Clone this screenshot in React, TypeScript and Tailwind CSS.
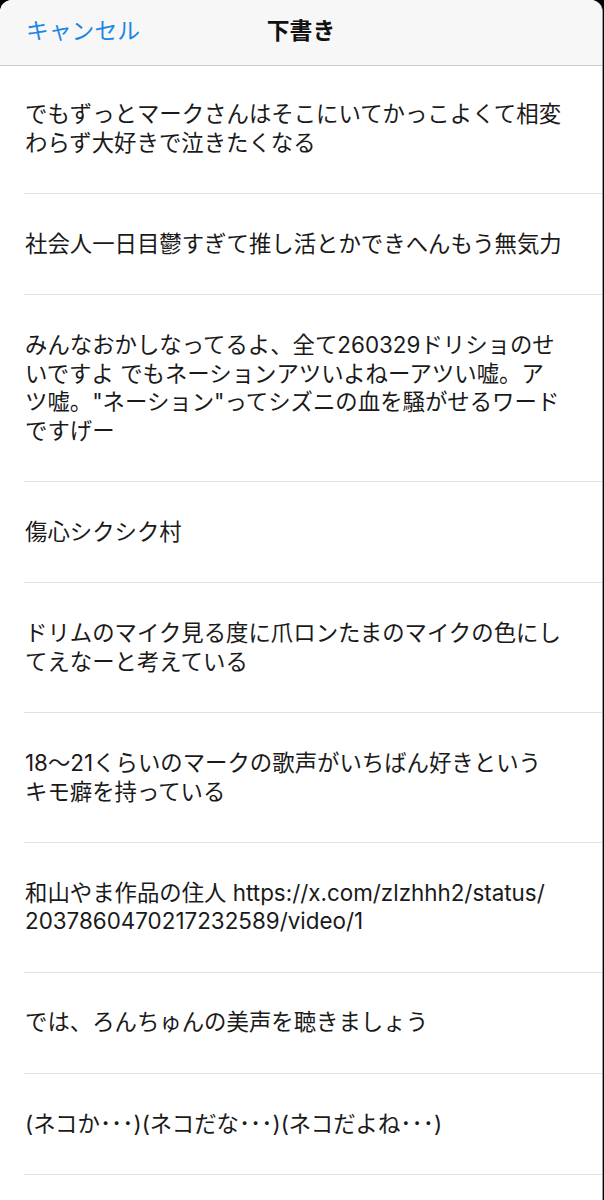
import React from "react";

const items: string[][] = [
  ["でもずっとマークさんはそこにいてかっこよくて相変", "わらず大好きで泣きたくなる"],
  ["社会人一日目鬱すぎて推し活とかできへんもう無気力"],
  [
    "みんなおかしなってるよ、全て260329ドリショのせ",
    "いですよ でもネーションアツいよねーアツい嘘。ア",
    "ツ嘘。\"ネーション\"ってシズニの血を騒がせるワード",
    "ですげー",
  ],
  ["傷心シクシク村"],
  ["ドリムのマイク見る度に爪ロンたまのマイクの色にし", "てえなーと考えている"],
  ["18〜21くらいのマークの歌声がいちばん好きという", "キモ癖を持っている"],
  ["和山やま作品の住人 https://x.com/zlzhhh2/status/", "2037860470217232589/video/1"],
  ["では、ろんちゅんの美声を聴きましょう"],
  ["(ネコか･･･)(ネコだな･･･)(ネコだよね･･･)"],
];

const font = {
  fontFamily: '"Inter", "Noto Sans CJK JP", sans-serif',
};

export default function App() {
  return (
    <div className="w-[604px] h-[1200px] bg-black overflow-hidden" style={font}>
      <div className="h-full bg-white rounded-t-[12px] overflow-hidden flex flex-col border-r border-r-[#9a9a9a] mr-[1px]">
        <div className="relative h-[66px] shrink-0 bg-[#f7f7f7] border-b border-[#cdcdcd] flex items-center px-[26px]">
          <span className="text-[22.8px] text-[#1d86e3] leading-none -mt-[2px]">キャンセル</span>
          <span className="absolute left-0 right-0 text-center text-[22.8px] font-bold text-[#111] leading-none -mt-[2px] pointer-events-none">
            下書き
          </span>
        </div>
        <div className="flex flex-col">
          {items.map((lines, i) => (
            <div key={i} className={`pl-[24px] ${i === 0 ? "pt-[34px]" : "pt-[35.65px]"}`}>
              <div className="pb-[35.65px] border-b border-[#e3e3e3] text-[22.4px] leading-[28.75px] text-[#1a1a1a] whitespace-nowrap pl-[1px]">
                {lines.map((l, j) => (
                  <div key={j}>{l}</div>
                ))}
              </div>
            </div>
          ))}
        </div>
      </div>
    </div>
  );
}
